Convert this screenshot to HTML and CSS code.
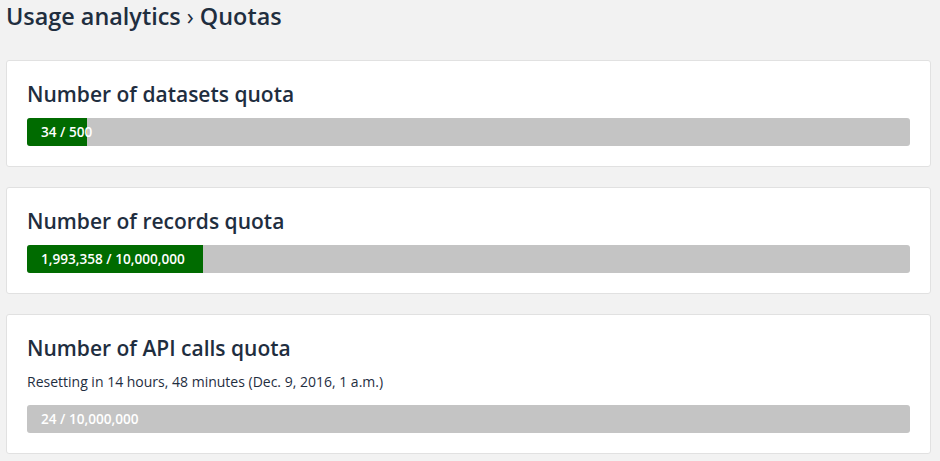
FILE: index.html
```html
<!DOCTYPE html>
<html lang="en">
<head>
<meta charset="utf-8">
<title>Quotas</title>
<link rel="stylesheet" href="styles.css">
</head>
<body>
<div class="page">
  <h1 class="page-title">Usage analytics <span class="sep">›</span> Quotas</h1>
  <div class="cards">
    <section class="card">
      <h2 class="card-title">Number of datasets quota</h2>
      <div class="bar"><div class="fill" style="width:6.8%"></div><span class="bar-label">34 / 500</span></div>
    </section>
    <section class="card">
      <h2 class="card-title">Number of records quota</h2>
      <div class="bar"><div class="fill" style="width:19.93%"></div><span class="bar-label">1,993,358 / 10,000,000</span></div>
    </section>
    <section class="card">
      <h2 class="card-title">Number of API calls quota</h2>
      <p class="card-note">Resetting in 14 hours, 48 minutes (Dec. 9, 2016, 1 a.m.)</p>
      <div class="bar"><div class="fill" style="width:0%"></div><span class="bar-label">24 / 10,000,000</span></div>
    </section>
  </div>
</div>
</body>
</html>
```
FILE: styles.css
```css
html, body {
  margin: 0;
  padding: 0;
  background: #f2f2f2;
}
body {
  font-family: "Open Sans", "Noto Sans", sans-serif;
  color: #1f2e3f;
}
.page {
  padding: 0 9px 0 6px;
}
.page-title {
  margin: 0;
  padding-top: 3px;
  font-size: 23.4px;
  font-weight: 600;
  line-height: 26px;
  height: 60px;
  box-sizing: border-box;
}
.sep {
  font-weight: 400;
}
.cards {
  display: flex;
  flex-direction: column;
  gap: 20px;
}
.card {
  background: #fff;
  border: 1px solid #e1e1e1;
  border-radius: 3px;
  padding: 18px 20px 20px;
}
.card-title {
  margin: 0 0 9px;
  font-size: 21px;
  font-weight: 600;
  line-height: 30px;
}
.card-note {
  margin: 0 0 14px;
  font-size: 14px;
  line-height: 19px;
}
.bar {
  position: relative;
  height: 28px;
  background: #c4c4c4;
  border-radius: 3px;
  overflow: hidden;
}
.fill {
  height: 100%;
  background: #006b00;
}
.bar-label {
  position: absolute;
  left: 14px;
  top: 0;
  line-height: 28px;
  font-size: 13.6px;
  font-weight: 600;
  color: #fff;
  white-space: nowrap;
}
```
